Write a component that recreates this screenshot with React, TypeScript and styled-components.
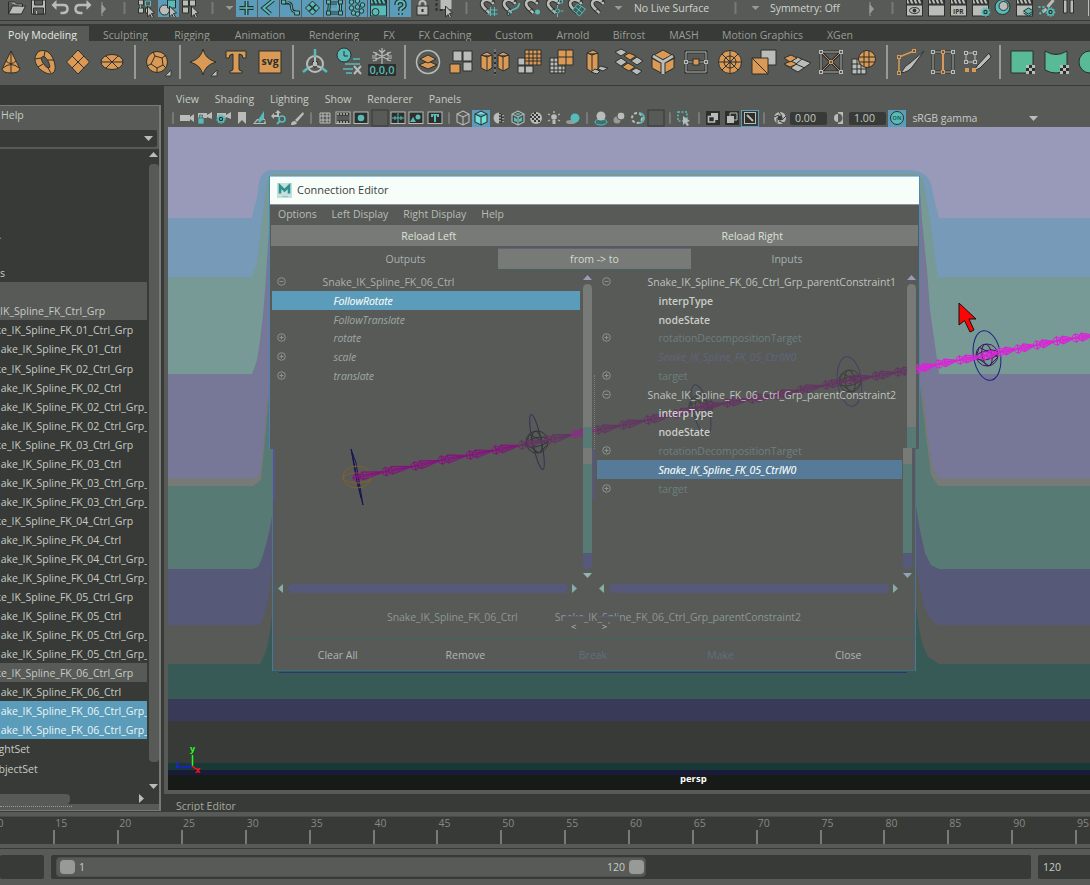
import React from "react";
import styled, { createGlobalStyle, css } from "styled-components";

const C = {
  mid: "#575a56", dark: "#373a36", light: "#777a76", pale: "#b9bcb8", text: "#c6cbc5",
  blue: "#5a9cba", teal: "#57bcb9", orange: "#da9a56", green: "#58bb96", line: "#2c2f2b", hue: "#979a96",
};

const Global = createGlobalStyle`
  *{box-sizing:border-box}
  body{margin:0;width:1090px;height:885px;overflow:hidden;background:${C.mid};
    font-family:"Open Sans","Noto Sans",sans-serif;font-size:10.5px;line-height:14px;color:${C.text};}
  svg{display:block;flex:none}
`;

const Page = styled.div`width:1090px;height:885px;display:flex;flex-direction:column;overflow:hidden;white-space:nowrap;`;
const StatusLine = styled.div`height:24px;flex:none;display:flex;align-items:flex-start;padding-left:6px;
  background:linear-gradient(${C.dark},${C.dark}) 0 20px/100% 1px no-repeat;`;
const StatusSlot = styled.div<{ $on?: boolean; $w?: number }>`
  width:${p => p.$w ?? 22}px;height:17px;flex:none;display:flex;justify-content:center;overflow:hidden;
  background:${p => (p.$on ? C.blue : "transparent")};background-clip:content-box;padding-right:${p => (p.$on ? 1 : 0)}px;
  svg{margin-top:-3px}`;
const StatusText = styled.div<{ $pad: number }>`width:97px;flex:none;padding-left:${p => p.$pad}px;line-height:17px;color:#d0d4ce;letter-spacing:-.05px;`;
const TabBar = styled.div`height:17px;flex:none;background:${C.dark};display:flex;overflow:hidden;`;
const Tab = styled.div<{ $on?: boolean; $w: number }>`
  width:${p => p.$w}px;flex:none;text-align:center;line-height:22px;height:18px;
  ${p => p.$on ? css`background:${C.mid};color:#e4e8e2;margin:2px 1px 0 0;line-height:18px;padding-right:4px;` : css`color:#9a9d98;`}`;
const Shelf = styled.div`height:44px;flex:none;display:flex;align-items:center;margin-left:-5.8px;padding-bottom:3px;`;
const ShelfSlot = styled.div`width:33.6px;height:40px;flex:none;display:flex;align-items:center;justify-content:center;`;
const ShelfSep = styled.div`width:11.8px;flex:none;height:34px;background:linear-gradient(${C.hue},${C.hue}) 5px 0/2px 100% no-repeat;`;
const Main = styled.div`flex:none;height:726px;display:flex;border-top:1px solid ${C.dark};`;

const Side = styled.div`width:164px;flex:none;background:${C.dark};padding-top:19px;height:725px;`;
const Outliner = styled.div`width:161px;height:706px;border:solid ${C.light};border-width:1px 2px 1px 0;background:${C.mid};display:flex;flex-direction:column;`;
const OutMenu = styled.div`height:24px;flex:none;padding:2px 0 0 1px;`;
const Search = styled.div`height:17px;flex:none;width:157px;background:${C.dark};display:flex;align-items:center;justify-content:flex-end;padding-right:4px;border-radius:0 2px 2px 0;`;
const OutBody = styled.div`height:644px;margin-top:2px;flex:none;display:flex;background:${C.dark};`;
const Tree = styled.div`width:147px;overflow:hidden;`;
const TreeRow = styled.div<{ $tone?: string; $in: number }>`height:19.06px;line-height:21px;color:${p => p.$tone === C.blue ? "#eef5f4" : C.text};background:${p => p.$tone ?? "transparent"};text-indent:${p => p.$in}px;`;
const VBar = styled.div`width:12px;display:flex;flex-direction:column;align-items:center;padding:3px 0 4px 1px;justify-content:space-between;`;
const VThumb = styled.div`width:10px;height:598px;background:${C.mid};border-radius:4px;margin-bottom:16px;`;
const HBar = styled.div`height:11px;flex:none;background:${C.dark};display:flex;align-items:center;justify-content:space-between;padding-right:15px;`;
const HThumb = styled.div`width:70px;height:10px;background:${C.mid};border-radius:0 4px 4px 0;`;
const Grip = styled.div`height:3px;width:72px;border-bottom:1px dotted ${C.hue};`;

const Work = styled.div`flex:1;display:flex;flex-direction:column;`;
const PanelMenu = styled.div`height:23px;flex:none;display:flex;padding:6px 0 0 12px;gap:15.9px;line-height:15px;letter-spacing:0;`;
const PanelBar = styled.div`height:18px;flex:none;display:flex;align-items:center;padding-left:3px;`;
const PSlot = styled.div<{ $on?: boolean; $box?: boolean; $w?: number }>`
  width:${p => p.$w ?? 18.3}px;height:17px;flex:none;display:flex;align-items:center;justify-content:center;
  background:${p => (p.$on ? C.blue : "transparent")};${p => p.$box && css`border:1px solid ${C.blue};background:${C.dark};`}`;
const PSep = styled.div<{ $w?: number }>`width:${p => p.$w ?? 10}px;height:12px;flex:none;display:flex;justify-content:center;
  &::after{content:"";width:2px;height:12px;background:${C.light};border-radius:1px;}`;
const NumField = styled.div`width:37px;height:13px;background:${C.dark};flex:none;padding-left:5px;line-height:13px;border-radius:2px;`;
const Gamma = styled.div`padding-left:6px;width:117px;line-height:18px;flex:none;letter-spacing:-.05px;`;
const Viewport = styled.div`margin-left:4px;height:663px;flex:none;position:relative;overflow:hidden;`;
const Band = styled.div<{ $h: number; $c: string }>`height:${p => p.$h}px;background:${p => p.$c};`;
const Scene = styled.svg<{ $x?: number; $y?: number }>`position:absolute;left:${p => p.$x ?? 0}px;top:${p => p.$y ?? 0}px;overflow:visible;`;
const Persp = styled.div`position:absolute;left:512px;top:646px;font-weight:700;font-size:9.5px;color:#fff;line-height:12px;`;
const ScriptTab = styled.div`height:18px;margin-top:4px;background:${C.dark};padding:5px 0 0 12px;line-height:15px;color:#a5a8a3;border-bottom:1px solid ${C.mid};`;

const Dialog = styled.div`position:absolute;left:101px;top:49px;width:651px;height:496px;display:flex;flex-direction:column;
  background:
    linear-gradient(#4b8cb4,#4a7fbd) 0 0/1px 273px no-repeat,
    linear-gradient(#4b8cb4,#4a7ba0) 650px 0/1px 273px no-repeat,
    linear-gradient(#5a6bb0,#3f7d98) 3px 273px/1px 222px no-repeat,
    linear-gradient(#4f6c98,#3f7d98) 646px 273px/1px 222px no-repeat,
    linear-gradient(#3c6c80,#3c6c80) 4px 494px/643px 1px no-repeat,
    linear-gradient(#57597a,#57597a) 4px 273px/2px 50px no-repeat,
    linear-gradient(${C.mid},${C.mid}) 0 0/651px 273px no-repeat,
    linear-gradient(${C.mid},${C.mid}) 3px 273px/644px 222px no-repeat;`;
const Layer = styled.div`position:relative;display:flex;flex-direction:column;height:496px;`;
const Title = styled.div`height:29px;flex:none;margin:0 1px;background:#f7fdf9;border-top:1px solid #9bc4e0;border-bottom:1px solid #8f94a0;color:#3b3f3b;
  display:flex;align-items:center;gap:5px;padding:0 0 1px 7px;font-size:11px;letter-spacing:-.03px;`;
const DMenu = styled.div`height:20px;flex:none;display:flex;gap:14.8px;padding:2px 0 0 9px;line-height:14px;color:#b6bdb8;`;
const Reload = styled.div`height:21px;flex:none;margin:0 2px;background:${C.light};display:flex;line-height:22px;color:#dde1db;
  span{width:50%;text-align:center;padding-right:8px}`;
const Heads = styled.div`height:23px;flex:none;display:flex;padding-top:2px;line-height:23px;text-align:center;color:#a9b0b4;`;
const Head = styled.div<{ $w: number; $btn?: boolean; $pad?: number }>`width:${p => p.$w}px;padding-left:${p => p.$pad ?? 0}px;height:21px;${p => p.$btn && css`background:${C.light};border-top:1px solid #5d6188;border-bottom:1px solid #5d8280;color:#d5dad5;line-height:21px;`}`;
const Lists = styled.div`height:313px;flex:none;display:flex;padding-left:3px;padding-top:3px;`;
const List = styled.div<{ $w: number }>`width:${p => p.$w}px;flex:none;`;
const ListRow = styled.div<{ $tone?: string; $end?: number }>`height:18.8px;display:flex;align-items:center;
  background:${p => p.$tone ?? "transparent"};margin-right:${p => p.$end ?? 0}px;`;
const Expander = styled.div`width:18px;display:flex;justify-content:center;flex:none;`;
const Label = styled.div<{ $in: number; $kind: string }>`margin-left:${p => p.$in}px;letter-spacing:-.03px;line-height:18px;padding-top:1px;
  ${p => p.$kind === "node" && css`color:#aab0ac;`}
  ${p => p.$kind === "bright" && css`color:#bfc3be;`}
  ${p => p.$kind === "attr" && css`color:#9ea8a8;font-style:italic;letter-spacing:-.1px;`}
  ${p => p.$kind === "sel" && css`color:#e2ecee;font-style:italic;text-shadow:0 0 .5px #e2ecee;`}
  ${p => p.$kind === "bold" && css`color:#c9cdc9;font-weight:600;letter-spacing:-.05px;`}
  ${p => p.$kind === "dim" && css`color:#6d7f80;letter-spacing:-.06px;`}
  ${p => p.$kind === "dimmer" && css`color:#5f6680;font-style:italic;`}`;
const DScroll = styled.div`width:10px;flex:none;display:flex;flex-direction:column;align-items:center;padding-top:3px;`;
const ThumbTop = styled.div<{ $x?: number }>`width:9px;height:164px;flex:none;margin:4px 0 0 ${p => p.$x ?? 0}px;border-radius:5px 5px 0 0;background:linear-gradient(${C.light} 143px,#587a74 143px);`;
const ThumbLow = styled.div<{ $x?: number }>`width:9px;height:121px;flex:none;margin:0 0 4px ${p => p.$x ?? 0}px;border-radius:0 0 5px 5px;background:linear-gradient(${C.light} 16px,#587a74 16px 105px,#57597a 105px);`;
const TriBox = styled.div<{ $x?: number }>`margin-left:${p => p.$x ?? 0}px;`;
const Split = styled.div`width:5px;flex:none;display:flex;flex-direction:column;align-items:center;padding-top:103px;`;
const Dots = styled.div`width:1px;height:74px;border-left:1px dotted #7a7d88;`;
const Smear = styled.div`width:5px;height:50px;background:linear-gradient(90deg,#57597a,${C.mid});`;
const HRow = styled.div`height:12px;flex:none;display:flex;padding-left:9px;align-items:center;`;
const HPill = styled.div`height:9px;border-radius:5px;background:#57597a;width:280px;flex:none;margin:0 4px 0 5px;`;
const Gap = styled.i<{ $w: number }>`width:${p => p.$w}px;flex:none;`;
const Foot = styled.div`height:43px;flex:none;position:relative;display:flex;padding:18px 0 0 118px;gap:37px;color:#8b9896;line-height:10px;letter-spacing:-.08px;`;
const Arrows = styled.div`position:absolute;left:302px;top:29px;display:flex;gap:25.5px;font-size:9.5px;line-height:8px;color:#a5b0b0;font-weight:600;`;
const Cover = styled.div<{ $l: number; $w: number }>`position:absolute;left:${p => p.$l}px;width:${p => p.$w}px;top:22px;height:6px;background:${C.mid};border-top:1px solid #5b5e80;`;
const Divider = styled.div`flex:none;height:1px;margin:1px 4px 0 7px;background:#3f6660;`;
const Buttons = styled.div`flex:none;margin:0 8px 0 5px;display:flex;line-height:33px;text-align:center;color:#aeb5b3;
  span{flex:1}`;
const Faint = styled.span`color:#606f80;`;

const TimeLine = styled.div`flex:none;height:36px;border-top:1px solid ${C.dark};background:${C.mid};padding:4px 0 0;overflow:hidden;`;
const Ruler = styled.div`height:28px;background:${C.dark};border-top:1px solid #494c48;display:flex;margin-left:-10.6px;`;
const Tick = styled.div`width:63.87px;flex:none;line-height:13px;color:#868984;padding-left:2px;
  background:linear-gradient(${C.light},${C.light}) 0 13px/2px 15px no-repeat;`;
const Range = styled.div`flex:none;height:37px;margin-top:1px;border-top:1px solid ${C.dark};padding-top:6px;display:flex;gap:7px;align-items:flex-start;`;
const RangeBox = styled.div<{ $w: number }>`width:${p => p.$w}px;flex:none;height:24px;background:${C.dark};border-radius:2px;padding:2px 5px;line-height:21px;color:#c9cdc7;`;
const Slider = styled.div`width:590px;height:20px;background:${C.mid};border-radius:4px;display:flex;align-items:center;padding:0 1px 0 3px;gap:4px;border:1px solid #4d504c;
  span{flex:1}`;
const Knob = styled.div`width:15px;height:14px;border-radius:4px;background:${C.hue};flex:none;`;

type P = { children?: React.ReactNode };
const S = ({ children }: P) => <svg width="22" height="22" viewBox="-10.500 -11 22 22" fill="none" stroke={C.line} strokeWidth="1">{children}</svg>;
const B = ({ children }: P) => <svg width="30" height="30" viewBox="-15 -15 30 30" fill={C.orange} stroke={C.line} strokeWidth="1">{children}</svg>;
const M = ({ children }: P) => <svg width="18" height="18" viewBox="-9 -9 18 18" fill={C.pale} stroke="none">{children}</svg>;
const Tri = ({ d, c = C.pale }: { d: "u" | "d" | "l" | "r"; c?: string }) => {
  const p = { u: "M0 5h9L4.5 0z", d: "M0 0h9L4.5 5z", l: "M5 0v9L0 4.5z", r: "M0 0v9L5 4.5z" }[d];
  const v = d === "u" || d === "d";
  return <svg width={v ? 9 : 5} height={v ? 5 : 9}><path d={p} fill={c} /></svg>;
};

const Sep = () => <StatusSlot><S><path d="M0-6V6" stroke={C.light} strokeWidth="2" /></S></StatusSlot>;
const ArrowSep = () => <StatusSlot $w={20}><S><path d="M-1.500-6V8M-1.500-3L2 1L-1.500 5z" stroke={C.hue} fill={C.hue} /></S></StatusSlot>;
const Drop = ({ w }: { w: number }) => <StatusSlot $w={w}><S><path d="M-4-2H4L0 2z" fill={C.hue} stroke="none" /></S></StatusSlot>;
const Pointer = () => <path d="M1-2L8 5L5 5.500L7 9L5 10L3.500 6.500L1 9z" fill={C.pale} />;
const Magnet = ({ children }: P) => <S>
  <path d="M5-4C3-8-3-10-6-6C-8-2-3 1 1 5" stroke={C.line} strokeWidth="4.500" />
  <path d="M5-4C3-8-3-10-6-6C-8-2-3 1 1 5" stroke={C.pale} strokeWidth="2.600" />
  <path d="M3-6l3-2M-3 3l3-3" stroke={C.line} />{children}</S>;
const Clap = ({ children, on }: P & { on?: boolean }) => <S>
  <rect x="-8" y="-3" width="16" height="11" fill={on ? C.teal : C.pale} /><rect x="-8" y="-9" width="16" height="5" fill={on ? C.teal : C.pale} />
  <path d="M-6-9l2 5M-2-9l2 5M2-9l2 5M6-9l2 5" strokeWidth="1.600" />{children}</S>;
const Gear = ({ x, y, r }: { x: number; y: number; r: number }) => <g><circle cx={x} cy={y} r={r} fill={C.line} stroke={C.teal} strokeWidth="1.600" /><circle cx={x} cy={y} r={r + 1.200} fill="none" stroke={C.teal} strokeWidth="1.200" strokeDasharray="1.400 1.400" /><circle cx={x} cy={y} r={r * .35} fill={C.teal} stroke="none" /></g>;

const Status = () => <StatusLine>
  <StatusSlot><S><path d="M-8-6h6l2 2h6v3M-8-6v12h13l4-8h-13l-4 8" fill={C.pale} /></S></StatusSlot>
  <StatusSlot><S><path d="M-7-8H7V6H-7z" fill={C.pale} /><path d="M-4-8h8v5h-8zM-5 0h10v6h-10z" fill={C.mid} /><path d="M-2 3v3" stroke={C.pale} /></S></StatusSlot>
  <StatusSlot><S><path d="M-7-3H3Q7-3 7 1T2 5H0" stroke={C.pale} strokeWidth="2.500" /><path d="M-4-8L-9-3L-4 2z" fill={C.pale} stroke="none" /></S></StatusSlot>
  <StatusSlot><S><path d="M7-3H-3Q-7-3-7 1T-2 5H0" stroke={C.pale} strokeWidth="2.500" /><path d="M4-8L9-3L4 2z" fill={C.pale} stroke="none" /></S></StatusSlot>
  <ArrowSep /><Sep />
  <StatusSlot><S><path d="M-8-8h5v5h-5zM-8 0h5v5h-5zM-1 0h5v5h-5z" fill={C.pale} /><path d="M-1-7h5v5h-5zM-6-3v3" stroke={C.teal} /><Pointer /></S></StatusSlot>
  <StatusSlot $on><S><circle cx="-4" cy="2" r="5" fill={C.pale} /><path d="M-1-8h8v8h-8z" fill={C.teal} /><Pointer /></S></StatusSlot>
  <StatusSlot><S><path d="M-8-8h6v6h-6zM-1-8h6v6h-6zM-8-1h6v6h-6z" fill={C.pale} /><Pointer /></S></StatusSlot>
  <Sep /><Drop w={12} />
  <StatusSlot $on><S><path d="M0-7V7M-7 0H7" stroke={C.line} strokeWidth="4" /><path d="M0-7V7M-7 0H7" stroke={C.teal} strokeWidth="1.500" /></S></StatusSlot>
  <StatusSlot $on><S><path d="M5-8L-5 0L2 6" stroke={C.line} strokeWidth="4" /><path d="M5-8L-5 0L2 6" stroke={C.teal} strokeWidth="2" /></S></StatusSlot>
  <StatusSlot $on><S><path d="M-7-5H-2Q1-5 1-1T5 4" stroke={C.line} strokeWidth="3" /><path d="M-9-8h4v4h-4zM4 3h5v4h-5z" fill={C.teal} /><path d="M-5-6Q1-6 1-1T5 4" stroke={C.teal} /></S></StatusSlot>
  <StatusSlot $on><S><path d="M0-7L7 0L0 7L-7 0z" fill={C.teal} /><path d="M-3.500-3.500L3.500 3.500M3.500-3.500L-3.500 3.500" strokeWidth="1.500" /></S></StatusSlot>
  <StatusSlot $on><S><path d="M-5-5H6V5H-6zM-5-5L-6 5" stroke={C.line} strokeWidth="3" /><path d="M-5-5H6V5H-6zM-3 1h6v-6" stroke={C.teal} /><path d="M-8-8h4v4h-4zM4-8h4v4h-4zM-8 3h4v4h-4zM4 3h4v4h-4z" fill={C.teal} /></S></StatusSlot>
  <StatusSlot $on><S>{[[-5, -6], [1, -7], [6, -3], [-5, 0], [1, -1], [5, 3], [-3, 5], [1, 6]].map(([x, y]) => <circle key={x + "," + y} cx={x} cy={y} r="2.300" fill={C.teal} />)}</S></StatusSlot>
  <StatusSlot $on><Clap on><circle cx="-3" cy="4" r="3.500" fill={C.teal} /></Clap></StatusSlot>
  <StatusSlot $on><S><path d="M-4-3Q-4-7 0-7T4-3Q4-1 0 1V3M0 5v2" stroke={C.line} strokeWidth="4.500" /><path d="M-4-3Q-4-7 0-7T4-3Q4-1 0 1V3M0 5v2" stroke={C.teal} strokeWidth="2" /></S></StatusSlot>
  <StatusSlot><S><path d="M-3-1V-4Q-3-7 0-7T3-4V-1" stroke={C.pale} strokeWidth="2" /><rect x="-5.500" y="-2" width="11" height="9" fill={C.pale} /><path d="M0 1v3" strokeWidth="2" /></S></StatusSlot>
  <StatusSlot><S><path d="M-8-9h10v11h-10z" stroke={C.line} strokeWidth="2" strokeDasharray="3 2" /><path d="M-4-8h11v9h-11z" fill={C.pale} stroke="none" /><Pointer /></S></StatusSlot>
  <Sep />
  <StatusSlot><Magnet><path d="M2-1v9M6-1v9M-1 2h10M-1 6h10" stroke={C.teal} /></Magnet></StatusSlot>
  <StatusSlot><Magnet><path d="M-2 6Q0 2 4 1T9-5" stroke={C.teal} strokeWidth="1.500" /><circle cx="-2" cy="6" r="1.500" fill={C.teal} /></Magnet></StatusSlot>
  <StatusSlot><Magnet><circle cx="5" cy="4" r="2.500" fill={C.teal} stroke="none" /></Magnet></StatusSlot>
  <StatusSlot><Magnet><circle cx="3" cy="3" r="2" stroke={C.teal} /><path d="M3-3v3M3 6v3M-3 3h3M6 3h3" stroke={C.teal} /><path d="M5-8h3v3h-3z" stroke={C.teal} /></Magnet></StatusSlot>
  <StatusSlot><Magnet><path d="M1-4L9 1L3 8L-4 2zM-1-1L6 5M5-2L0 5" stroke={C.teal} fill="#3f5f5c" /></Magnet></StatusSlot>
  <StatusSlot><Magnet /></StatusSlot>
  <Drop w={18} /><StatusText $pad={6}>No Live Surface</StatusText>
  <Sep /><Drop w={18} /><StatusText $pad={5}>Symmetry: Off</StatusText><ArrowSep /><Sep />
  <StatusSlot><Clap><ellipse cy="2.500" rx="5" ry="3" /><circle cy="2.500" r="1.500" fill={C.line} /></Clap></StatusSlot>
  <StatusSlot><Clap /></StatusSlot>
  <StatusSlot><Clap><text x="-5.500" y="6" fontSize="6.500" fontWeight="700" fill={C.line} stroke="none">IPR</text></Clap></StatusSlot>
  <StatusSlot><Clap><Gear x={5} y={4} r={3} /></Clap></StatusSlot>
  <StatusSlot><S><circle r="7.500" cy="-1" fill={C.teal} /><circle cx="1" cy="-2" r="4.500" fill={C.pale} /></S></StatusSlot>
  <StatusSlot><Clap><path d="M-1 3L4 0L9 3L4 6zM-1 5L4 8L9 5" fill={C.teal} /></Clap></StatusSlot>
  <StatusSlot><S><path d="M7-8L1-1M0 1L-4 4" stroke={C.pale} strokeWidth="3" /><path d="M-8-1h6M-7 6l5-5" stroke={C.teal} strokeDasharray="2 2" strokeWidth="2" /><Gear x={4} y={4} r={3} /></S></StatusSlot>
  <StatusSlot><S><path d="M-5-8h3.500V5h-3.500zM1.500-8H5V5H1.500z" fill={C.pale} /></S></StatusSlot>
  <StatusSlot $w={18}><S><path d="M0-8V8" stroke={C.pale} /></S></StatusSlot>
</StatusLine>;

const tabs: [string, number][] = [["Poly Modeling", 89], ["Sculpting", 71], ["Rigging", 62], ["Animation", 74], ["Rendering", 74], ["FX", 36], ["FX Caching", 76], ["Custom", 62], ["Arnold", 56], ["Bifrost", 56], ["MASH", 54], ["Motion Graphics", 103], ["XGen", 52]];

const Sk = (p: { d: string; f?: string; w?: number; s?: string }) => <path d={p.d} fill={p.f ?? C.orange} strokeWidth={p.w ?? 1} stroke={p.s ?? C.line} />;
const Checker = () => <g><rect x="4" y="3" width="9" height="9" fill={C.line} stroke="none" /><path d="M4 3h3v3h-3zM10 3h3v3h-3zM7 6h3v3h-3zM4 9h3v3h-3zM10 9h3v3h-3z" fill={C.pale} stroke="none" /></g>;
const Corner = () => <path d="M8 14L14 8V14z" fill={C.pale} strokeWidth=".8" />;
const Pts = ({ list, c = C.pale }: { list: number[][]; c?: string }) => <g>{list.map(([x, y]) => <rect key={x + "_" + y} x={x - 1.5} y={y - 1.5} width="3" height="3" fill={C.mid} stroke={c} />)}</g>;
const shelf: (React.ReactNode | null)[] = [
  <><Sk d="M0-11L9 7Q8 11 0 11T-9 7z" /><Sk d="M0-11V3M-5-1Q0 4 5-1M-8 6Q0-1 8 6M0 3V11" f="none" /></>,
  <><path d="M-9-7C-7-13 2-13 6-7S12 8 8 11S-4 9-7 5S-11-3-9-7z" /><path d="M-3-5Q0-7 3-1T4 6Q1 6-2 1T-3-5z" fill={C.mid} /><Sk d="M-10-3l6-1M0-11l-1 6M9-2l-6 0M6 11l-3-5M-7 5l5-3" f="none" /></>,
  <><Sk d="M0-12L11.500 0L0 12L-11.500 0z" /><Sk d="M-6-6L6 6M6-6L-6 6" f="none" /></>,
  <><ellipse rx="11" ry="7.500" /><Sk d="M-11 0H11M-6-6L6 6M6-6L-6 6" f="none" /></>, null,
  <><circle r="10.500" /><Sk d="M-2-6L5-4L6 3L0 6L-6 2zM-2-6L-4-10M5-4L9-7M6 3L9 6M0 6V10M-6 2L-10 4" f="none" /><Corner /></>, null,
  <><Sk d="M0-13Q2-3 13 0Q2 3 0 13Q-2 3-13 0Q-2-3 0-13z" /><Corner /></>,
  <Sk d="M-10-11H10V-4H7Q7-8 3-8V7Q3 9 6 9V11H-6V9Q-3 9-3 7V-8Q-7-8-7-4H-10z" />,
  <><rect x="-11" y="-11" width="22" height="22" /><text y="2.500" fontSize="10.500" fontWeight="700" textAnchor="middle" fill={C.line} stroke="none">svg</text></>, null,
  <><circle cy="2" r="8" fill="none" stroke={C.pale} strokeWidth="2" /><circle cy="2" r="3" fill={C.pale} /><Sk d="M0-13V-5M-7 6L-12 10M7 6L12 10" s={C.teal} w={2.5} f="none" /><Sk d="M0-5V0M-2 4L-7 6M2 4L7 6" s={C.pale} w={2} f="none" /></>,
  <><circle cx="-5" cy="-7" r="7" fill={C.teal} /><Sk d="M-5-11V-6H-1" f="none" /><Sk d="M4-3H11M-4 2H11M-6 7H4M-3 11H3" f="none" s={C.teal} w={1.5} /><Sk d="M5 4L12 12M12 4L5 12" s={C.pale} w={2} /></>,
  <><Sk d="M0-14V2M-9-10L9-1M9-10L-9-1M-3-12l3 3l3-3M-10-6h4v-4M10-6h-4v-4M-10-4h4v3M10-4h-4v3" s={C.pale} w={1.2} f="none" /><rect x="-14" y="2" width="28" height="12" rx="1" fill={C.line} stroke="none" /><text y="12" fontSize="11" fontWeight="600" textAnchor="middle" fill={C.teal} stroke="none">0,0,0</text></>, null,
  <><circle r="11.500" fill="none" stroke={C.pale} strokeWidth="1.500" /><Sk d="M-9 3L0-1L9 3L0 7z" /><Sk d="M-8-3L0-7L8-3L0 1z" /></>,
  <><Sk d="M-8-11H1V-1H-8zM2-11H11V-1H2zM2 0H11V9H2z" f={C.pale} /><Sk d="M-11 2H-1V11H-11z" /></>,
  <><Sk d="M-14-7L-8-10L-3-7V6L-8 9L-14 6zM-8-5V9M-14-7L-8-5L-3-7M3-7L8-10L14-7V6L8 9L3 6zM8-5V9M3-7L8-5L14-7" /><Sk d="M0-13V13" w={2} /><path d="M0-13V13" stroke={C.pale} strokeDasharray="3 2" /></>,
  <><Sk d="M-11-4H-4V3H-11zM-11 4H-4V11H-11zM-4 4H4V11H-4z" f={C.pale} /><Sk d="M-4-12H12V3H-4zM0-12V3M4-12V3M8-12V3M-4-8H12M-4-4H12M-4-1H12" /></>,
  <><Sk d="M-12-4H3V11H-12zM-8-4V11M-4-4V11M0-4V11M-12 0H3M-12 4H3M-12 8H3" f={C.pale} /><Sk d="M-4-12H11V3H-4zM4-12V3M-4-5H11" /></>,
  <><Sk d="M-9-9L-3-12L2-9V7L-4 10L-9 7zM-4-7V10M-9-9L-4-7L2-9" /><Sk d="M4 4L12 6L7 9L2 7zM-1 7L4 9L1 12L-5 10z" f={C.pale} /></>,
  <><Sk d="M-8-13L-2-10L-8-6L-14-10zM8-5L14-1L8 3L2-1zM-8-4L-2 0L-8 4L-14 0zM7 6L13 9L8 13L2 9z" f={C.pale} /><Sk d="M0-9L7-6L1-2L-5-6zM-1 1L6 5L0 9L-7 5z" /></>,
  <><Sk d="M-11-6L0-12L11-6V6L0 12L-11 6z" /><path d="M-11-6L0 0L11-6M0 0V12" stroke={C.line} strokeWidth="5" fill="none" /><path d="M-10-6L0 0L10-6M0 0V12" stroke={C.pale} strokeWidth="3" fill="none" /></>,
  <><Sk d="M-10-10H10V10H-10zM-10 0H10" s={C.line} w={3} f="none" /><Sk d="M-10-10H10V10H-10zM-10 0H10" s={C.pale} f="none" /><Pts list={[[-10, 0], [10, 0]]} /><rect x="-3" y="-3" width="6" height="6" /></>,
  <><circle r="11.500" /><circle r="6" /><circle r="1" /><Sk d="M-11 0H11M0-11V11M-8-8L8 8M8-8L-8 8" f="none" /></>,
  <><Sk d="M-3-12H12V3H-3z" f={C.pale} /><Sk d="M-12-4H4V12H-12zM-12-4L4 12" /></>,
  <><Sk d="M0-5L14 1L1 10L-12 3zM-6 0L8 6M5-3L-6 6" f={C.pale} /><Sk d="M-6-1L0 2L-7 5L-13 2z" /><Sk d="M-6-7L0-4L-7 0L-13-4z" /></>,
  <><Sk d="M-10-10H10V10H-10zM-10-10L10 10M10-10L-10 10" w={3} f="none" /><Sk d="M-10-10L10 10M10-10L-10 10" s="#c9866a" f="none" /><Sk d="M-10-10H10V10H-10z" s={C.pale} f="none" /><Pts list={[[-10, -10], [10, -10], [10, 10], [-10, 10]]} /><Pts list={[[0, 0]]} c={C.orange} /></>,
  <><Sk d="M-12-3H2V12H-12zM-7-3V12M-3-3V12M-12 2H2M-12 7H2" f={C.pale} /><circle cx="3" cy="-3" r="8.500" /><Sk d="M-5-5H11M-5 0H11M0-11V5M5-11V5" f="none" /></>, null,
  <><Sk d="M-11 11V-5L4-11" s={C.orange} w={1.5} f="none" /><Sk d="M14-11L3 4Q-1 10-9 11Q-5 3 0 1z" f={C.pale} /><Pts list={[[-11, 11], [-11, -5], [4, -11]]} c={C.orange} /></>,
  <><Sk d="M-10-10H10V10H-10z" w={3} f="none" /><Sk d="M-10-10V10M10-10V10M-10-10H10M-10 10H10" s={C.pale} f="none" /><Pts list={[[-10, -10], [10, -10], [10, 10], [-10, 10]]} /><Sk d="M0-9V9" s={C.orange} w={2} /><Pts list={[[0, -10], [0, 10]]} c={C.orange} /></>,
  <><Sk d="M-11-9H-2V0H-11z" s={C.pale} f="none" /><Pts list={[[-11, -9], [-2, -9], [-11, 0], [-2, 0]]} /><Sk d="M12-9L0 4L-3 9L3 6L14-5z" f={C.pale} /><rect x="-12" y="6" width="4" height="4" stroke="none" /><rect x="-5" y="6" width="4" height="4" stroke="none" /></>, null,
  <><Sk d="M-11-11H11V11H-11z" f={C.green} /><Checker /></>,
  <><Sk d="M-11-11Q0-4 11-11V8Q0 14-11 8z" f={C.green} /><Checker /></>,
  <><circle r="11" fill={C.green} /><Checker /></>,
];

const Box = ({ children }: P) => <M><rect x="-7" y="-6" width="14" height="11.500" fill={C.line} stroke={C.pale} />{children}</M>;
const Cam = ({ children }: P) => <M><path d="M-7-3H3V3H-7zM3-1L7-4V4L3 1z" />{children}</M>;
const Cube = ({ c, f }: { c: string; f: string }) => <M><path d="M0-7L6-4V4L0 7L-6 4V-4zM-6-4L0-1L6-4M0-1V7" fill={f} stroke={c} strokeWidth="1.100" /></M>;
const Blank = () => <M><rect x="-8" y="-8" width="16" height="16" fill="none" stroke={C.dark} /></M>;

const PanelTools = () => <PanelBar>
  <PSep $w={11} />
  <PSlot><Cam /></PSlot>
  <PSlot><M><path d="M-7-5H2V0H-7zM2-3L7-6V1L2-1z" /><path d="M-7 0h6v6h-6zM-5.500 0v-3h3v3" fill={C.teal} stroke={C.mid} strokeWidth=".7" /></M></PSlot>
  <PSlot><M><path d="M-7-5H2V0H-7zM2-3L7-6V1L2-1z" /><Gear x={-3} y={1} r={3} /></M></PSlot>
  <PSlot><M><path d="M-4-6H4V6L0 2L-4 6z" /></M></PSlot>
  <PSlot><M><path d="M-7 6L-3 1H5L6 6zM-5 5H4L5 2H-2z" fillRule="evenodd" /><path d="M-2 2L4-7V1L-1 5z" fill={C.teal} /></M></PSlot>
  <PSlot><M><path d="M-8-2L-5-5V-3H-2V-5H-4L-1-8L2-5H0V-1H-5V1z" /><circle cx="3" cy="1" r="3" stroke={C.teal} strokeWidth="1.600" fill="none" /><path d="M1 3L-2 6" stroke={C.teal} strokeWidth="2" /></M></PSlot>
  <PSlot><M><path d="M6-6L-2 2L0 4L7-4zM-2 3Q-6 3-6 7Q-1 7 0 5z" /></M></PSlot>
  <PSep $w={9.5} />
  <PSlot><M><path d="M-5-5H5V5H-5zM-2-5V5M2-5V5M-5-2H5M-5 2H5" fill="none" stroke={C.pale} /></M></PSlot>
  <PSlot><Box><path d="M-6-4H6M-6 4H6" stroke={C.pale} strokeDasharray="2 1" strokeWidth="1.500" /><path d="M-6-2.500H6V2.500H-6z" fill={C.mid} /></Box></PSlot>
  <PSlot><Box><circle r="3.300" fill={C.teal} /></Box></PSlot>
  <PSlot><Blank /></PSlot>
  <PSlot><Box><path d="M0-5V5M-6 0H6M-3-2v4M3-2v4" stroke={C.teal} /></Box></PSlot>
  <PSlot><Box><circle cx="2" cy="-1" r="2.500" fill={C.teal} /><path d="M-6 4L-3-1L0 4z" fill={C.teal} /></Box></PSlot>
  <PSlot><Box><path d="M-4-4H4V-1H2V-2.500H1V4H-1V-2.500H-2V-1H-4z" fill={C.teal} /></Box></PSlot>
  <PSep />
  <PSlot><Cube c={C.pale} f="none" /></PSlot>
  <PSlot $on><Cube c={C.dark} f="#6fe0dc" /></PSlot>
  <PSlot><M><circle r="5.500" /><path d="M0-5.500A5.500 5.500 0 0 1 0 5.500z" fill={C.dark} /><path d="M1-4v9M4-3v7" stroke={C.pale} strokeDasharray="1.500 1.500" strokeWidth="1.500" /></M></PSlot>
  <PSlot><M><path d="M0-7L6-4V4L0 7L-6 4V-4zM-6-4L0-1L6-4M0-1V7" fill="#3a5654" stroke={C.pale} strokeWidth="1.100" /><path d="M-4-1L-1 1V4L-4 3zM4-1L1 1V4L4 3zM0-5L3-4L0-3L-3-4z" fill={C.teal} /></M></PSlot>
  <PSlot><M><circle r="6" /><path d="M-4-4h2v2h-2zM0-4h2v2h-2zM-2-2h2v2h-2zM2-2h2v2h-2zM-4 0h2v2h-2zM0 0h2v2h-2zM-2 2h2v2h-2zM2 2h2v2h-2zM-6-2h2v2h-2zM-2-6h2v2h-2z" fill={C.dark} /></M></PSlot>
  <PSlot><M><circle cy="-1" r="2.800" /><path d="M-1.500 2h3v4h-3z" /><path d="M0-7v2M-6-4l2 1M6-4l-2 1M-6 3l2-1M6 3l-2-1" stroke={C.pale} strokeWidth="1.300" /></M></PSlot>
  <PSlot><M><ellipse cx="-2" cy="4" rx="5" ry="2" fill={C.hue} /><circle cx="2" cy="0" r="4.500" fill={C.teal} /></M></PSlot>
  <PSep />
  <PSlot><M><ellipse cy="4" rx="6" ry="3" fill="#377370" stroke={C.teal} /><circle cy="-2" r="4.500" /></M></PSlot>
  <PSlot><M><circle cx="-2" cy="2" r="3.500" fill={C.hue} /><circle cx="2" cy="-2" r="4" stroke={C.mid} /></M></PSlot>
  <PSlot><M><circle r="5" fill="none" stroke={C.pale} strokeWidth="2" strokeDasharray="3 2" /><path d="M2-5A5 5 0 0 1 2 5" fill="none" stroke={C.teal} strokeWidth="2" /></M></PSlot>
  <PSlot><Blank /></PSlot>
  <PSep />
  <PSlot><M><path d="M-6-6H3V3H-6z" fill="none" stroke={C.teal} strokeDasharray="2 1.500" strokeWidth="1.500" /><path d="M-1-2L6 3L3 4L5 7L3 8L1 5L-1 7z" /></M></PSlot>
  <PSep $w={11} />
  <PSlot><M><rect x="-7" y="-7" width="14" height="14" fill={C.line} /><path d="M-2-5H5V2H-2z" /><path d="M-4.500-1.500H1.500V4H-4.500z" stroke={C.pale} fill={C.line} strokeWidth="1.600" /></M></PSlot>
  <PSlot><M><rect x="-7" y="-7" width="14" height="14" fill={C.line} /><path d="M-2-5H5V2H-2z" fill="none" stroke={C.pale} /><path d="M-5-2H2V5H-5z" /></M></PSlot>
  <PSlot $box><M><rect x="-5.500" y="-5.500" width="11" height="11" fill={C.line} stroke={C.pale} /><path d="M-3-3L3 3" stroke={C.pale} strokeWidth="2" /></M></PSlot>
  <PSep />
  <PSlot $w={21}><M><circle r="6" /><circle r="2.500" fill={C.dark} /><path d="M-1-6L2-2M6-2L2 2M4 5L-1 3M-3 5L-3 0M-6-1L-1-3" stroke={C.dark} /></M></PSlot>
  <NumField>0.00</NumField>
  <PSlot $w={22}><M><path d="M0-4A4 4 0 0 0 0 4z" fill={C.pale} /><path d="M0-6H5V6H0V4.500A4.500 4.500 0 0 0 0-4.500z" /></M></PSlot>
  <NumField>1.00</NumField>
  <PSlot $w={2} />
  <PSlot $on><M><circle r="6.500" fill={C.teal} stroke={C.line} /><text y="2" fontSize="5.500" fontWeight="700" textAnchor="middle" fill="#1f5c5c">ON</text></M></PSlot>
  <Gamma>sRGB gamma</Gamma><PSlot $w={20}><Tri d="d" /></PSlot>
</PanelBar>;

const bands: [number, string][] = [[91, "#9999b9"], [59, "#779ab8"], [97, "#779a96"], [104, "#777898"], [8, "#777a76"], [83, "#587a74"], [56, "#575978"], [39, "#575a56"], [35, "#385a57"], [22, "#383a58"], [42, "#373a36"], [7, "#183a37"], [5, "#191b39"], [15, "#171b17"]];

/* Contours that bend upward around the floating window, in window coordinates. */
const halo: [string, string][] = [
  ["#779ab8", "M252 218L254 208L257 198L259 182Q262 170 272 170H908Q926 170 931 184L935 203L939 218z"],
  ["#779ab8", "M252 218H280V277H252zM910 218H939V277H910z"],
  ["#779a96", "M252 277L257 262L259 245L262 220L265 195L268 178L275 174H915L922 178L926 195L931 225L934 250L938 277z"],
  ["#779a96", "M252 277H280V374H252zM910 277H939V374H910z"],
  ["#777898", "M252 374L257 360L260 340L263 315L265 290L267 260L269 230V374zM939 374L935 345L930 310L927 270L922 220L920 190V374z"],
  ["#777898", "M252 374H280V478H252zM910 374H939V478H910z"],
  ["#777a76", "M252 480L260 474L264 440L268 388V486H252zM939 480L932 464L927 430L922 380V486H939z"],
  ["#587a74", "M252 487L261 480L265 440L269 395L275 449V569H252zM939 487L931 475L926 436L920 385L914 449V569H939z"],
  ["#575978", "M252 569L258 567L262 558L266 545L270 528L274 505V625H252zM939 569L931 565L925 553L920 530L915 500V625H939z"],
  ["#575a56", "M252 625H260L264 615L268 600L271 575L274 560V664H252zM939 625L931 620L925 608L920 588L915 560V664H939z"],
  ["#385a57", "M252 664H260L265 654L268 643L271 625L274 600V674H252zM939 664L928 657L923 646L919 628L915 600V674H939z"],
];

const spine = [[357, 477], [386, 471.5], [415, 466], [442, 460], [470, 455], [496, 450], [522, 445], [548, 440], [575, 434], [598, 430], [623, 425], [648, 420], [676, 414], [701, 407], [727, 403], [752, 399], [777, 395], [801, 390], [826, 385], [850, 380], [876, 376], [898, 372], [918, 369], [939, 364], [960, 360], [984, 356], [1000, 352], [1018, 349], [1037, 345], [1057, 341], [1076, 338], [1096, 335]];
const boneColor = (x: number) => (x >= 915 ? "#e01fda" : x < 520 ? "#86127f" : x > 570 && x < 590 ? "#8f2a8a" : "#653463");

const Bones = () => <g>{spine.slice(0, -1).map(([x, y], i) => {
  const [a, b] = spine[i + 1]; const d = Math.hypot(a - x, b - y); const k = boneColor(x);
  const ang = (Math.atan2(b - y, a - x) * 180) / Math.PI;
  return <g key={x} transform={`translate(${x} ${y}) rotate(${ang})`} stroke={k} fill="none">
    <circle r="3.700" /><circle r="1.200" /><path d="M-5 0H4M0-5V5" /><path d={`M2-1L6-4L${d - 2} 0L6 4L2 1z`} fill={k} fillOpacity={x > 915 ? .6 : .35} /><path d={`M6-4V4M6-1L${d - 3} 0L6 1`} /></g>;
})}</g>;

const Ball = ({ x, y, r, c }: { x: number; y: number; r: number; c: string }) => <g transform={`translate(${x} ${y})`} stroke={c} fill="none">
  <circle r={r} /><ellipse rx={r} ry={r * .4} transform="rotate(-12)" /><ellipse rx={r * .45} ry={r} transform="rotate(-10)" /><path d={`M${-r * .7}-${r * .7}L${r} 2L2 ${r}L-${r} 2z`} /></g>;

const Rig = () => <Scene $x={-269} $y={-176} width="1090" height="885">
  <g stroke="#141654" fill="none">
    <path d="M351 449L356 463L363 505L357 482zM352 453L361 498" />
    <ellipse cx="537" cy="442" rx="4.500" ry="28" transform="rotate(-12 537 442)" stroke="#30335c" />
    <ellipse cx="701" cy="410" rx="8" ry="26" transform="rotate(-14 701 410)" stroke="#3c3f60" />
    <ellipse cx="849.500" cy="381.500" rx="12" ry="25" transform="rotate(-7 849.500 381.500)" stroke="#404365" />
    <ellipse cx="987" cy="355.500" rx="13.500" ry="25" transform="rotate(-9 987 355.500)" stroke="#1a2380" />
  </g>
  <g stroke="#85602c" fill="none"><ellipse cx="357" cy="477" rx="14" ry="11" /><ellipse cx="357" cy="478" rx="14" ry="5" /></g>
  <Ball x={537} y={442} r={11} c="#343733" /><Ball x={701} y={406} r={12} c="#414440" />
  <Ball x={850} y={381} r={11} c="#3c3f3b" /><Ball x={987} y={355} r={11} c="#3b1a60" />
  <Bones />
  <path d="M959 303V325L964.500 320.500L970 332L974 330L969 319H976z" fill="#fb0505" stroke="#111" strokeLinejoin="round" />
</Scene>;

const Exp = ({ k }: { k?: string }) => <Expander>{k && <svg width="9" height="9" fill="none" stroke="#8b938f"><circle cx="4.500" cy="4.500" r="3.800" /><path d={k === "+" ? "M2.500 4.500h4M4.500 2.500v4" : "M2.500 4.500h4"} /></svg>}</Expander>;
const left = [["-", "node", "Snake_IK_Spline_FK_06_Ctrl"], ["", "sel", "FollowRotate"], ["", "attr", "FollowTranslate"], ["+", "attr", "rotate"], ["+", "attr", "scale"], ["+", "attr", "translate"]];
const right = [["-", "bright", "Snake_IK_Spline_FK_06_Ctrl_Grp_parentConstraint1"], ["", "bold", "interpType"], ["", "bold", "nodeState"], ["+", "dim", "rotationDecompositionTarget"], ["", "dimmer", "Snake_IK_Spline_FK_05_CtrlW0"], ["+", "dim", "target"], ["-", "bright", "Snake_IK_Spline_FK_06_Ctrl_Grp_parentConstraint2"], ["", "bold", "interpType"], ["", "bold", "nodeState"], ["+", "dim", "rotationDecompositionTarget"], ["", "sel", "Snake_IK_Spline_FK_05_CtrlW0"], ["+", "dim", "target"]];
const Rows = ({ data, tone, end }: { data: string[][]; tone: string; end: number }) => <>{data.map(([k, kind, t], i) =>
  <ListRow key={i} $tone={kind === "sel" ? tone : undefined} $end={end}><Exp k={k} />
    <Label $in={kind === "node" || kind === "bright" ? 32.5 : 43.5} $kind={kind}>{t}</Label></ListRow>)}</>;

const Connection = () => <Dialog>
  <Rig />
  <Layer>
    <Title>
      <svg width="15" height="15"><rect width="15" height="15" fill="#c5dfdc" /><path d="M3 10.500V3L7.500 7.500L12 3V10.500" fill="none" stroke="#2d928f" strokeWidth="2.600" /><path d="M5 13.500h6" stroke="#8fc5c3" /></svg>
      Connection Editor
    </Title>
    <DMenu><span>Options</span><span>Left Display</span><span>Right Display</span><span>Help</span></DMenu>
    <Reload><span>Reload Left</span><span>Reload Right</span></Reload>
    <Heads><Head $w={229} $pad={44}>Outputs</Head><Head $w={193} $btn>from -&gt; to</Head><Head $w={192}>Inputs</Head></Heads>
    <Lists>
      <List $w={310}><Rows data={left} tone={C.blue} end={2} /></List>
      <DScroll><Tri d="u" c="#9a9bb8" /><ThumbTop /><ThumbLow /><Tri d="d" c="#8fb5ae" /></DScroll>
      <Split><Dots /><Smear /></Split>
      <List $w={309}><Rows data={right} tone="#567b98" end={4} /></List>
      <DScroll><TriBox $x={1}><Tri d="u" c="#9a9bb8" /></TriBox><ThumbTop $x={1} /><ThumbLow $x={-7} /><TriBox $x={-7}><Tri d="d" c="#8fa5b5" /></TriBox></DScroll>
    </Lists>
    <HRow><Tri d="l" c="#86aea8" /><HPill /><Tri d="r" c="#86aea8" /><Gap $w={22} /><Tri d="l" c="#86aea8" /><HPill /><Tri d="r" c="#86aea8" /></HRow>
    <Foot><span>Snake_IK_Spline_FK_06_Ctrl</span><span>Snake_IK_Spline_FK_06_Ctrl_Grp_parentConstraint2</span>
      <Cover $l={294} $w={22} /><Cover $l={328} $w={23} />
      <Arrows><span>&lt;</span><span>&gt;</span></Arrows></Foot>
    <Divider />
    <Buttons><span>Clear All</span><span>Remove</span><Faint>Break</Faint><Faint>Make</Faint><span>Close</span></Buttons>
  </Layer>
</Dialog>;

const grp = (n: string) => [`ke_IK_Spline_FK_${n}_Ctrl_Grp`, `ake_IK_Spline_FK_${n}_Ctrl`];
const sub = (n: string) => [`ake_IK_Spline_FK_${n}_Ctrl_Grp_`, `ake_IK_Spline_FK_${n}_Ctrl_Grp_`];
const tree = ["", "", "", "", ".", "", "s", "", "_IK_Spline_FK_Ctrl_Grp", ...grp("01"), ...["02", "03", "04", "05", "06"].flatMap(n => [...grp(n), ...sub(n)]), "ghtSet", "bjectSet"];
const indent = (t: string) => (t[0] === "k" || t[0] === "_" ? -4.5 : t[0] === "g" || t[0] === "b" ? -1.5 : t[0] === "." ? -1.5 : t[0] === "a" ? .7 : 0);
const tone = (i: number) => (i === 7 || i === 8 || i === 27 ? C.mid : i === 29 || i === 30 ? C.blue : undefined);

export default function App() {
  return <Page>
    <Global />
    <Status />
    <TabBar>{tabs.map(([t, w], i) => <Tab key={t} $w={w} $on={i === 0}>{t}</Tab>)}</TabBar>
    <Shelf>{shelf.map((n, i) => n ? <ShelfSlot key={i}><B>{n}</B></ShelfSlot> : <ShelfSep key={i} />)}</Shelf>
    <Main>
      <Side>
        <Outliner>
          <OutMenu>Help</OutMenu>
          <Search><Tri d="d" /></Search>
          <OutBody>
            <Tree>{tree.map((t, i) => <TreeRow key={i} $tone={tone(i)} $in={indent(t)}>{t}</TreeRow>)}</Tree>
            <VBar><Tri d="u" /><VThumb /><Tri d="d" /></VBar>
          </OutBody>
          <HBar><HThumb /><Tri d="r" /></HBar>
          <Grip />
        </Outliner>
      </Side>
      <Work>
        <PanelMenu>{["View", "Shading", "Lighting", "Show", "Renderer", "Panels"].map(t => <span key={t}>{t}</span>)}</PanelMenu>
        <PanelTools />
        <Viewport>
          {bands.map(([h, c]) => <Band key={c} $h={h} $c={c} />)}
          <Scene $x={-168} $y={-127} width="1090" height="885">
            {halo.map(([c, d]) => <path key={d} d={d} fill={c} />)}
            <path d="M279 672.500H907" stroke="#2f3365" />
            <path d="M192.500 755V766" stroke="#2f2" strokeWidth="1.500" /><path d="M192 766L180 768" stroke="#1a1aee" strokeWidth="1.500" /><path d="M192 766L196 769" stroke="#f11" strokeWidth="1.500" />
            <g fontSize="9" fontWeight="700"><text x="190" y="752" fill="#2f2">y</text><text x="176" y="768" fill="#1a1aee">z</text><text x="195" y="773" fill="#f11">x</text></g>
          </Scene>
          <Connection />
          <Persp>persp</Persp>
        </Viewport>
        <ScriptTab>Script Editor</ScriptTab>
      </Work>
    </Main>
    <TimeLine><Ruler>{Array.from({ length: 18 }, (_, i) => <Tick key={i}>{10 + i * 5}</Tick>)}</Ruler></TimeLine>
    <Range>
      <RangeBox $w={44} />
      <RangeBox $w={980}><Slider><Knob /><span>1</span>120<Knob /></Slider></RangeBox>
      <RangeBox $w={60}>120</RangeBox>
    </Range>
  </Page>;
}
